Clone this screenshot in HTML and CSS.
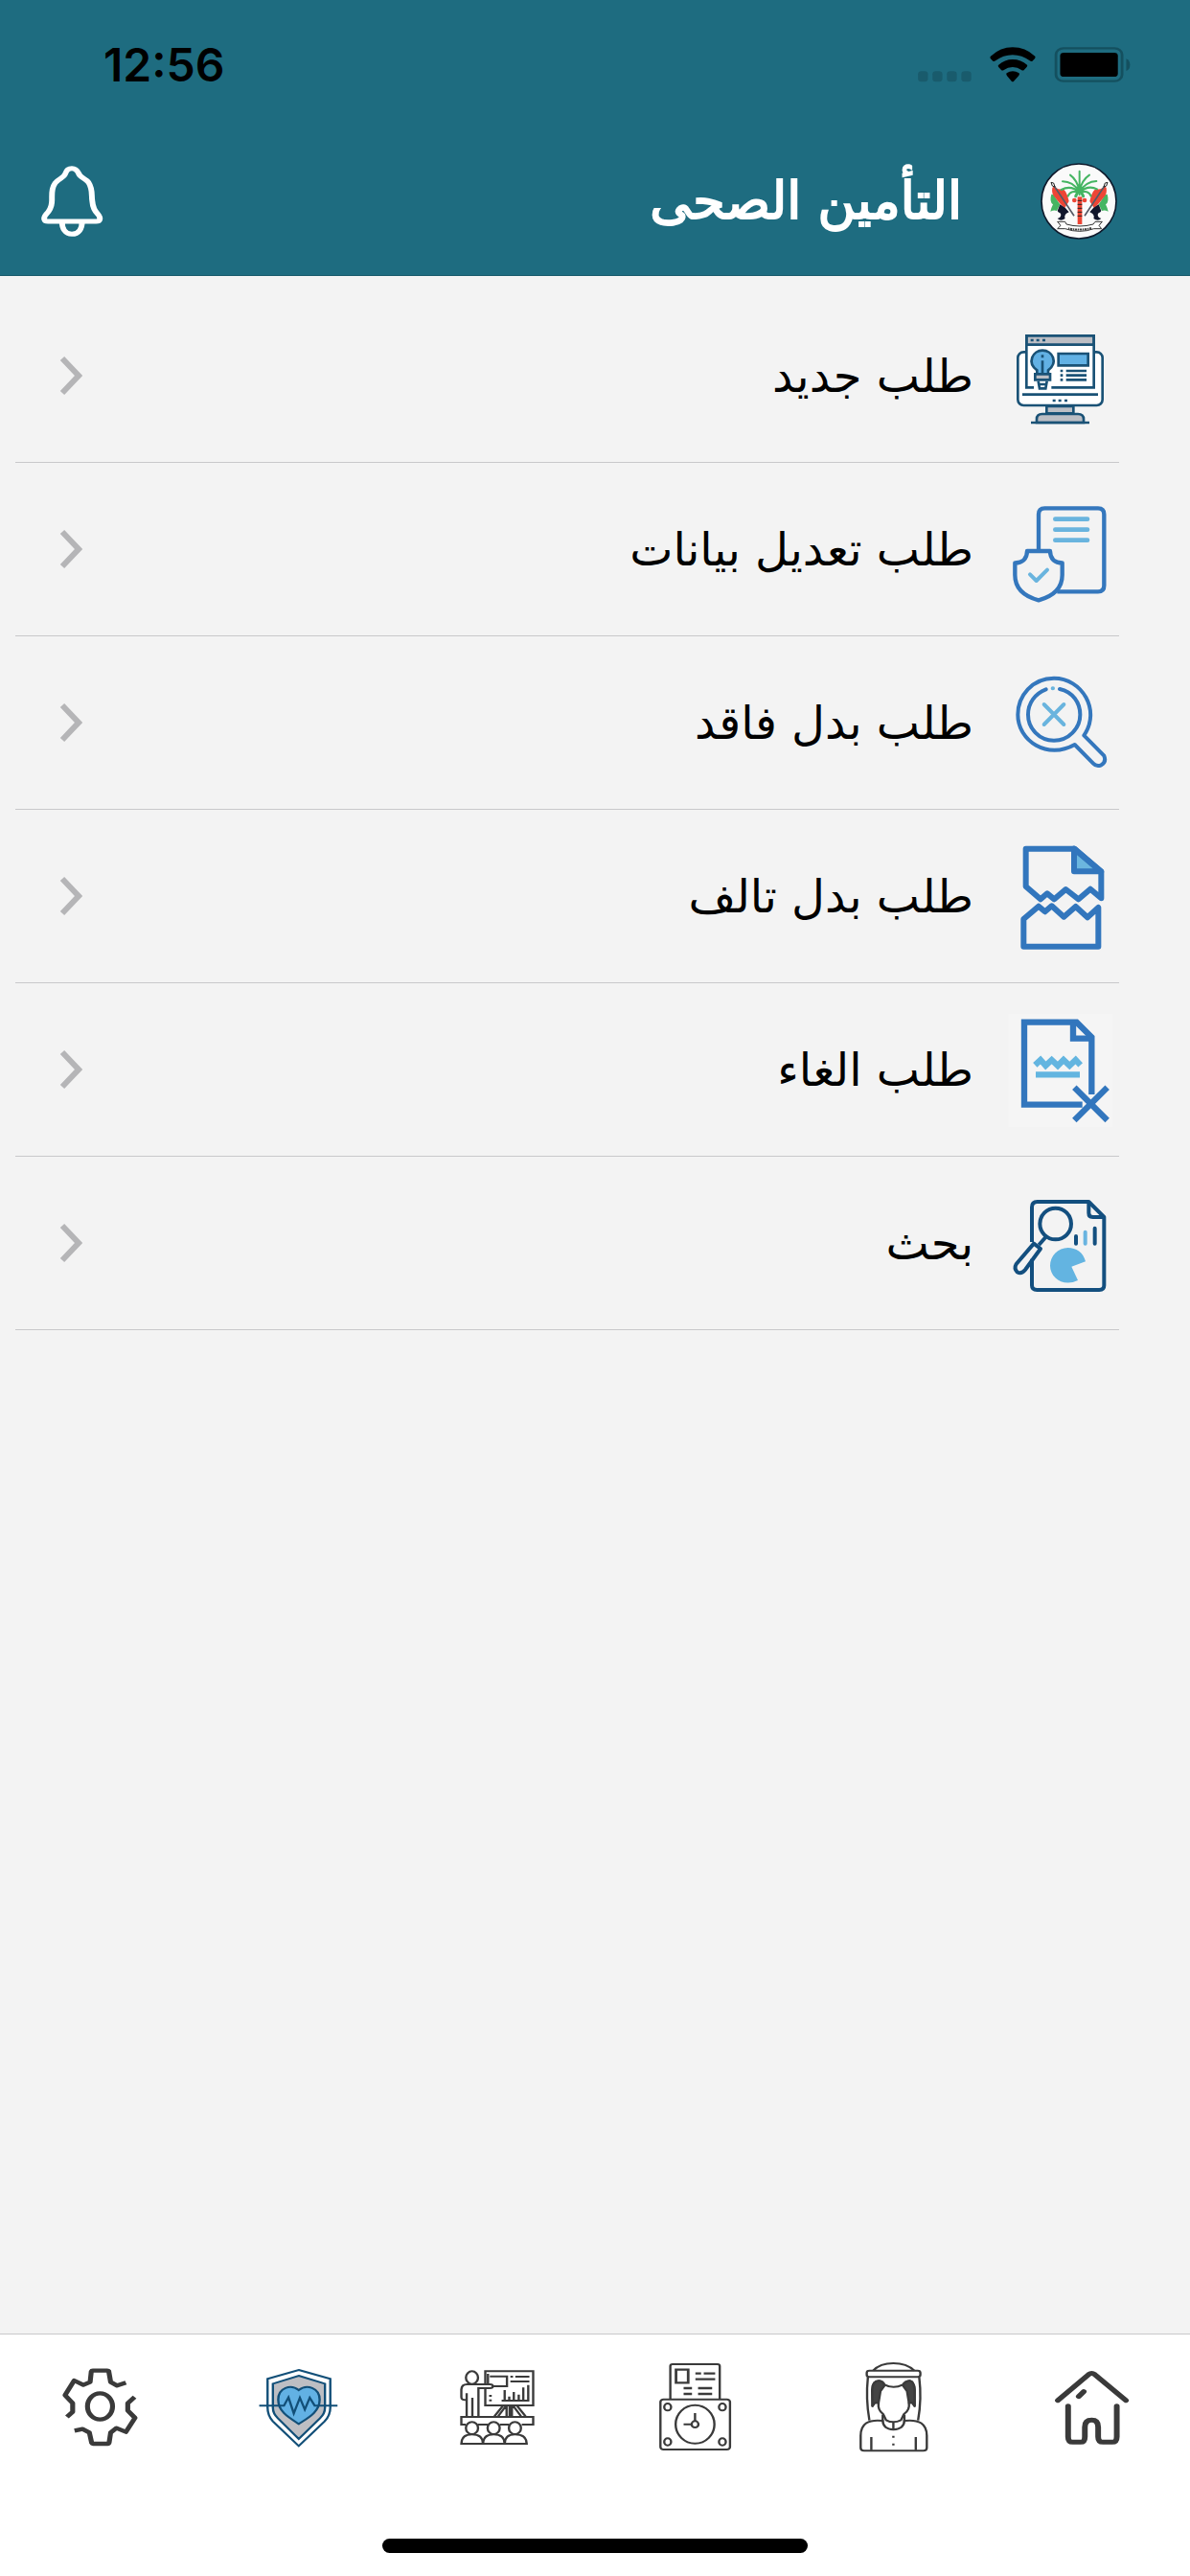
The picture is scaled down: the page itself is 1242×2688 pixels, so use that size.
FILE: index.html
```html
<!DOCTYPE html>
<html lang="ar" dir="rtl">
<head>
    <meta charset="UTF-8">
    <meta name="viewport" content="width=device-width, initial-scale=1.0">
    <title>التأمين الصحى</title>
    <link rel="stylesheet" href="styles.css">
</head>
<body>
    <header class="header">
        <div class="status" dir="ltr">
            <span class="time">12:56</span>
            <svg class="status-icons" viewBox="840 141 570 126" preserveAspectRatio="none" aria-hidden="true">
                <g fill="#195b6c">
                    <rect x="848" y="223" width="26" height="33" rx="9"/>
                    <rect x="886" y="223" width="26" height="33" rx="9"/>
                    <rect x="924" y="223" width="26" height="33" rx="9"/>
                    <rect x="962" y="223" width="26" height="33" rx="9"/>
                </g>
                <path d="M1039 176Q1065 148 1097 148Q1130 148 1156 176Q1158 180 1155 184L1149 191Q1146 194 1142 190Q1122 172 1097 172Q1072 172 1052 190Q1048 194 1045 191L1039 184Q1036 180 1039 176ZM1060 203Q1076 186 1097 186Q1119 186 1135 203Q1137 206 1134 210L1127 219Q1124 222 1120 219Q1110 210 1097 210Q1084 210 1074 219Q1070 222 1067 219L1060 210Q1057 206 1060 203ZM1081 229Q1097 217 1114 229Q1116 232 1113 237L1100 254Q1097 257 1094 254L1082 237Q1079 232 1081 229Z"/>
                <rect x="1211" y="151" width="174" height="103" rx="20" fill="none" stroke="#14505f" stroke-width="7"/>
                <rect x="1222" y="165" width="152" height="75" rx="10"/>
                <path d="M1396 184Q1406 189 1406 203Q1406 217 1396 222Z" fill="#14505f"/>
            </svg>
        </div>
        <div class="title-bar">
            <svg class="logo" viewBox="39 24 252 252" aria-hidden="true">
                <circle cx="165" cy="150" r="117" fill="#fafafa" stroke="#0f1a2c" stroke-width="5"/>
                <g id="flag">
                    <path d="M79 128Q72 152 84 160Q78 172 76 182Q88 176 96 180L106 160Q92 140 86 130Z" fill="#45b562"/>
                    <path d="M88 102Q96 114 110 112Q126 110 134 150L120 172Q104 156 92 140Q78 128 82 108Z" fill="#ee4535"/>
                    <path d="M106 160Q122 168 134 184L126 188Q118 196 122 204Q108 214 98 204Q112 200 108 188Q98 184 98 180Z" fill="#11162c"/>
                    <path d="M86 100L150 196" stroke="#555a66" stroke-width="5"/>
                    <path d="M78 91L86 93L90 105L82 102Z" fill="#fff" stroke="#222" stroke-width="3"/>
                </g>
                <use href="#flag" transform="translate(333 0) scale(-1 1)"/>
                <path d="M161 136H175V222H161Z" fill="#ee4535"/>
                <path d="M161 148H175M161 160H175M161 172H175M161 184H175M161 196H175" stroke="#222" stroke-width="3"/>
                <circle cx="151" cy="147" r="7" fill="#ee4535"/>
                <circle cx="183" cy="147" r="7" fill="#ee4535"/>
                <g fill="none" stroke="#45b562" stroke-width="6" stroke-linecap="round">
                    <path d="M167 130V56M167 118Q160 84 138 68M167 118Q174 84 198 68M167 120Q146 88 114 88M167 120Q188 88 220 87M167 122Q140 98 110 114M167 122Q194 98 222 112M167 124Q140 112 131 134M167 124Q194 112 203 134"/>
                    <path d="M155 134L167 112L179 134" stroke-width="9"/>
                </g>
                <path d="M98 214H122L126 222Q168 234 210 222L216 214H238L228 226L236 236H212Q168 252 122 236H98L108 226Z" fill="#fff" stroke="#333" stroke-width="3"/>
                <path d="M132 235Q168 243 204 234" fill="none" stroke="#444" stroke-width="6" stroke-dasharray="4 2 7 2"/>
            </svg>
            <h1 class="title">التأمين الصحى</h1>
            <button class="bell" type="button" aria-label="الإشعارات">
                <svg viewBox="103 510 172 240" preserveAspectRatio="none" fill="none" stroke="#fff" stroke-width="15" stroke-linejoin="round" aria-hidden="true">
                    <path d="M189 527C179 527 174 535 172 543C168 558 155 557 145 573C132 594 138 615 136 634C135 650 130 660 121 671C112 684 116 693 126 693H253C263 693 267 684 258 671C248 659 244 646 243 630C240 610 245 593 233 571C224 557 211 557 207 543C204 535 199 527 189 527Z"/>
                    <path d="M163 693C163 716 172 733 189 733C207 733 216 716 216 693"/>
                </svg>
            </button>
        </div>
    </header>

    <main class="list">
        <a class="row" href="#new">
            <svg class="row-icon" viewBox="0 -9 384 390" fill="none" stroke="#1a5276" stroke-width="8" aria-hidden="true">
                <rect x="67" y="112" width="265" height="167" rx="18" fill="#fff"/>
                <path d="M81 245H318"/>
                <path d="M94 61H305V223H94Z" fill="#fff" stroke="none"/>
                <path d="M94 61H305V89H94Z" fill="#bcbec4"/>
                <path d="M94 61V223H117M172 223H305V61"/>
                <path d="M107 75H116M125 75H134M144 75H153M176 264H185M194 264H203M213 264H222"/>
                <path d="M194 117H287V154H194Z" fill="#62b1e4"/>
                <path d="M200 171H208M200 185H208M200 199H208M218 171H282M218 185H282M218 199H282"/>
                <path d="M127 181V169C94 145 114 107 144 107C176 107 194 145 162 169V181Z" fill="#62b1e4"/>
                <path d="M144 121V130M144 139V181"/>
                <path d="M121 181H168V199H121Z" fill="#bcbec4"/>
                <path d="M131 203L135 226H154L158 203M133 213H157"/>
                <path d="M157 282H241V304H157Z" fill="#bcbec4"/>
                <path d="M126 333V322Q126 306 143 306H255Q273 306 273 322V333Z" fill="#bcbec4"/>
                <path d="M108 333H291"/>
            </svg>
            <span class="row-text">طلب جديد</span>
            <svg class="chevron" viewBox="0 0 24 42" aria-hidden="true"><path d="M3 3L20 21L3 39"/></svg>
        </a>
        <a class="row" href="#edit">
            <svg class="row-icon" viewBox="0 -6 384 390" fill="none" stroke="#3477bd" stroke-width="13" stroke-linejoin="round" aria-hidden="true">
                <path d="M132 190V80Q132 61 151 61H318Q337 61 337 80V303Q337 322 318 322H190"/>
                <path d="M184 95H285M184 128H285M184 161H285" stroke="#69b4de" stroke-width="14" stroke-linecap="round"/>
                <path d="M96 195H168C168 220 183 232 206 232V270C206 314 172 338 132 349C91 338 58 314 58 270V232C80 232 96 220 96 195Z"/>
                <path d="M105 268L125 288L159 254" stroke="#69b4de" stroke-width="12" stroke-linecap="round"/>
            </svg>
            <span class="row-text">طلب تعديل بيانات</span>
            <svg class="chevron" viewBox="0 0 24 42" aria-hidden="true"><path d="M3 3L20 21L3 39"/></svg>
        </a>
        <a class="row" href="#lost">
            <svg class="row-icon" viewBox="0 -3 384 390" fill="none" stroke="#3477bd" stroke-width="12" stroke-linecap="round" stroke-linejoin="round" aria-hidden="true">
                <path d="M245 261L303 320Q313 331 328 325Q345 315 337 296L274 232C328 154 268 53 180 53C112 53 67 108 67 167C67 250 160 309 245 261Z"/>
                <path d="M198 87C239 96 262 130 262 167C262 210 226 248 180 248C134 248 99 210 99 167C99 131 121 101 155 88"/>
                <g stroke="#69b4de"><path d="M176 85H177M149 135L211 198M211 135L149 198"/></g>
            </svg>
            <span class="row-text">طلب بدل فاقد</span>
            <svg class="chevron" viewBox="0 0 24 42" aria-hidden="true"><path d="M3 3L20 21L3 39"/></svg>
        </a>
        <a class="row" href="#damaged">
            <svg class="row-icon" viewBox="0 0 384 390" fill="none" stroke="#3276bd" stroke-width="18" stroke-linejoin="round" aria-hidden="true">
                <path d="M243 47V118H328Z" fill="#6bb6df"/>
                <path d="M92 47H245L328 119V202L294 173L257 205L217 174L181 205L159 187L138 205L92 165Z"/>
                <path d="M85 353V267L132 227L152 244L173 226L211 260L248 228L285 262L319 231V353Z"/>
            </svg>
            <span class="row-text">طلب بدل تالف</span>
            <svg class="chevron" viewBox="0 0 24 42" aria-hidden="true"><path d="M3 3L20 21L3 39"/></svg>
        </a>
        <a class="row" href="#cancel">
            <svg class="row-icon" viewBox="0 3 384 390" fill="none" stroke="#3276bd" stroke-width="19" aria-hidden="true">
                <path d="M38 24H364V378H38Z" fill="#f5f5f5" stroke="none"/>
                <path d="M269 308H87V50H251L298 97V276"/>
                <path d="M240 50V101H298"/>
                <path d="M121 184L138 168L154 186L173 168L192 186L210 168L229 186L248 168L263 184M123 214H261" stroke="#63b5e0"/>
                <path d="M244 254L347 357M347 254L244 357"/>
            </svg>
            <span class="row-text">طلب الغاء</span>
            <svg class="chevron" viewBox="0 0 24 42" aria-hidden="true"><path d="M3 3L20 21L3 39"/></svg>
        </a>
        <a class="row" href="#search">
            <svg class="row-icon" viewBox="0 -9 384 390" fill="none" stroke="#134f7f" stroke-width="12" stroke-linejoin="round" aria-hidden="true">
                <path d="M111 183V74Q111 57 128 57H289L337 105V319Q337 333 322 333H127Q111 333 111 319V236"/>
                <path d="M289 57V92Q289 105 302 105H337"/>
                <circle cx="185" cy="126" r="49"/>
                <path d="M154 168L133 192M117 188L138 204L90 270Q78 285 65 277Q54 266 62 252Z"/>
                <g stroke-linecap="round"><path d="M249 165V188M308 140V188"/><path d="M278 152V188" stroke="#69b4e0"/></g>
                <path d="M235 260L279 244C272 215 249 201 224 201C193 201 168 226 168 257C168 295 210 325 255 303Z" fill="#63b4e1" stroke="none"/>
            </svg>
            <span class="row-text">بحث</span>
            <svg class="chevron" viewBox="0 0 24 42" aria-hidden="true"><path d="M3 3L20 21L3 39"/></svg>
        </a>
    </main>

    <nav class="tabs">
        <a class="tab" href="#home" aria-label="الرئيسية">
            <svg class="tab-icon" viewBox="1186 129 242 300" preserveAspectRatio="none" stroke-width="15" stroke-linecap="round" stroke-linejoin="round">
                <path d="M1219 254L1300 173Q1308 166 1316 173L1398 254M1274 242L1287 227"/>
                <path d="M1246 272V368Q1246 385 1258 385H1279Q1290 385 1290 368V338Q1290 316 1308 316Q1325 316 1325 338V368Q1325 385 1338 385H1362Q1374 385 1374 368V272"/>
            </svg>
        </a>
        <a class="tab" href="#employee" aria-label="الموظف">
            <svg class="tab-icon" viewBox="663 129 242 300" preserveAspectRatio="none" stroke-width="6" stroke-linejoin="round">
                <path d="M732 161Q750 138 785 138Q820 138 840 161"/>
                <rect x="715" y="161" width="141" height="20" rx="7"/>
                <path d="M718 182Q712 250 722 317M853 182Q860 250 850 317"/>
                <path d="M730 272V218Q730 194 747 193Q757 194 762 205Q785 220 810 205Q816 194 828 193Q840 196 841 220V272L835 262H826C828 278 824 288 813 297L805 316Q785 328 766 316L758 297C748 288 744 278 746 262H736Z"/>
                <path d="M729 222Q730 194 747 193Q757 194 762 208L751 226L746 262H736L730 272ZM841 222Q840 196 828 193Q816 194 810 208L821 226L826 262H835L841 272Z" fill="#444"/>
                <path d="M757 299V318Q699 310 699 365V403Q699 412 708 412H864Q873 412 873 403V365Q873 310 814 318V299"/>
                <path d="M757 316Q757 344 785 346Q814 344 814 316M785 323V346M727 369V410M844 369V410M785 365V371M785 389V395"/>
            </svg>
        </a>
        <a class="tab" href="#attendance" aria-label="الحضور">
            <svg class="tab-icon" viewBox="140 129 242 300" preserveAspectRatio="none" stroke-width="6">
                <path d="M197 251V147Q197 141 203 141H321Q327 141 327 147V251"/>
                <rect x="171" y="251" width="183" height="157" rx="8"/>
                <path d="M212 158H244V199H212Z" stroke-width="7"/>
                <path d="M263 170H278M285 170H315M263 188H315M232 216H254M270 216H307M232 234H254M270 234H307" stroke-width="7"/>
                <ellipse cx="262" cy="329" rx="51" ry="60"/>
                <ellipse cx="262" cy="329" rx="9" ry="10"/>
                <path d="M262 294V319M232 329H253"/>
                <ellipse cx="190" cy="275" rx="9" ry="11"/>
                <ellipse cx="334" cy="275" rx="9" ry="11"/>
                <ellipse cx="190" cy="384" rx="9" ry="11"/>
                <ellipse cx="334" cy="384" rx="9" ry="11"/>
            </svg>
        </a>
        <a class="tab" href="#training" aria-label="التدريب">
            <svg class="tab-icon" viewBox="1186 129 242 300" preserveAspectRatio="none" stroke-width="6">
                <ellipse cx="1243" cy="183" rx="16" ry="20"/>
                <path d="M1278 204V163H1404V270H1278V215M1285 204V171M1290 179H1335V210H1298"/>
                <path d="M1344 180H1351M1357 180H1394M1344 195H1394M1288 240H1295M1288 254H1295M1321 255H1394M1329 222V255M1341 242V255M1353 228V255M1366 236V255M1378 214V255M1391 206V255"/>
                <path d="M1227 253Q1215 254 1215 244V220Q1216 204 1230 204H1290Q1298 204 1298 210Q1298 216 1290 216H1260V304M1229 304V232M1244 246V304"/>
                <path d="M1302 304L1324 272M1312 304L1332 272M1334 272V304M1348 272V304M1342 272V304M1352 272L1372 304M1362 272L1384 304"/>
                <path d="M1227 330H1215V306H1404V330H1374M1258 330H1285M1316 330H1341"/>
                <ellipse cx="1243" cy="341" rx="16" ry="19"/>
                <ellipse cx="1300" cy="341" rx="16" ry="19"/>
                <ellipse cx="1356" cy="341" rx="16" ry="19"/>
                <path d="M1215 390Q1215 361 1243 361Q1272 361 1272 390ZM1272 390Q1272 361 1300 361Q1329 361 1329 390ZM1329 390Q1329 361 1356 361Q1387 361 1387 390Z"/>
            </svg>
        </a>
        <a class="tab" href="#insurance" aria-label="التأمين الصحى" aria-current="page">
            <svg class="tab-icon tab-icon-active" viewBox="663 129 242 300" preserveAspectRatio="none" stroke-width="6">
                <path d="M786 159L869 187V277Q869 302 854 320L786 397L718 320Q704 302 704 277V187Z"/>
                <path d="M786 177L855 202V277Q855 296 842 310L786 375L731 310Q718 296 718 277V202Z" fill="#bdbec3"/>
                <path d="M786 222C765 202 732 215 732 252C732 290 760 308 786 328C812 308 841 290 841 252C841 215 807 202 786 222Z" fill="#62b1e4"/>
                <path d="M682 271H747L759 245L773 295L789 246L802 283L815 246L828 271H888"/>
            </svg>
        </a>
        <a class="tab" href="#settings" aria-label="الإعدادات">
            <svg class="tab-icon" viewBox="140 129 242 300" preserveAspectRatio="none" stroke-width="13" stroke-linejoin="round">
                <ellipse cx="262" cy="273" rx="33" ry="41"/>
                <path d="M330 199L307 208L290 197L285 163Q284 161 281 161H243Q240 161 239 164L236 197L218 206L194 192L170 238L190 263V290L175 306"/>
                <path d="M195 349L216 344L234 355L240 387Q241 390 244 390H282Q285 390 286 386L290 355L305 341L330 353L354 309L335 286V263L353 244"/>
            </svg>
        </a>
        <div class="home-indicator"></div>
    </nav>
</body>
</html>
```
FILE: styles.css
```css
* {
    box-sizing: border-box;
}
body {
    margin: 0;
    min-height: 100vh;
    display: flex;
    flex-direction: column;
    background-color: #f3f3f3;
    color: #000;
    font-family: "DejaVu Sans", sans-serif;
}
svg {
    display: block;
    flex: none;
}

/* header */
.header {
    background-color: #1e6c80;
    border-bottom: 1px solid #185a6b;
}
.status {
    height: 132px;
    padding: 4px 61px 0 108px;
    display: flex;
    justify-content: space-between;
    align-items: center;
}
.time {
    font-family: Inter, sans-serif;
    font-size: 48px;
    font-weight: 600;
    line-height: 56px;
}
.status-icons {
    width: 226px;
    height: 42px;
}
.title-bar {
    height: 155px;
    padding: 0 74px 0 41px;
    display: flex;
    align-items: center;
}
.logo {
    width: 84px;
    height: 84px;
}
.title {
    flex: 1;
    margin: 0 80px 0 0;
    color: #fff;
    font-size: 54px;
    font-weight: normal;
    line-height: 80px;
    -webkit-text-stroke: 2px #fff;
}
.bell {
    padding: 0;
    border: none;
    background: none;
    cursor: pointer;
}
.bell svg {
    width: 68px;
    height: 80px;
}

/* menu list */
.list {
    flex: 1;
    padding: 14px 74px 40px 16px;
}
.row {
    height: 181px;
    padding-left: 46px;
    display: flex;
    align-items: center;
    border-bottom: 1px solid #c8c8ca;
    color: #000;
    text-decoration: none;
}
.row-icon {
    width: 128px;
    height: 130px;
}
.row-text {
    flex: 1;
    margin-right: 24px;
    font-size: 48px;
    line-height: 72px;
}
.chevron {
    width: 24px;
    height: 42px;
    fill: none;
    stroke: #b5b5b7;
    stroke-width: 6px;
}

/* bottom tabs */
.tabs {
    display: grid;
    grid-template-columns: repeat(6, 1fr);
    background-color: #fff;
    border-top: 1px solid #c8c8ca;
}
.tab {
    height: 213px;
    padding-top: 27px;
    display: flex;
    justify-content: center;
}
.tab-icon {
    width: 96px;
    height: 100px;
    fill: none;
    stroke: #3a3a3a;
}
.tab-icon-active {
    stroke: #124f78;
}
.home-indicator {
    grid-column: 1 / -1;
    width: 444px;
    height: 15px;
    margin: 0 auto 24px;
    border-radius: 8px;
    background-color: #000;
}
```
